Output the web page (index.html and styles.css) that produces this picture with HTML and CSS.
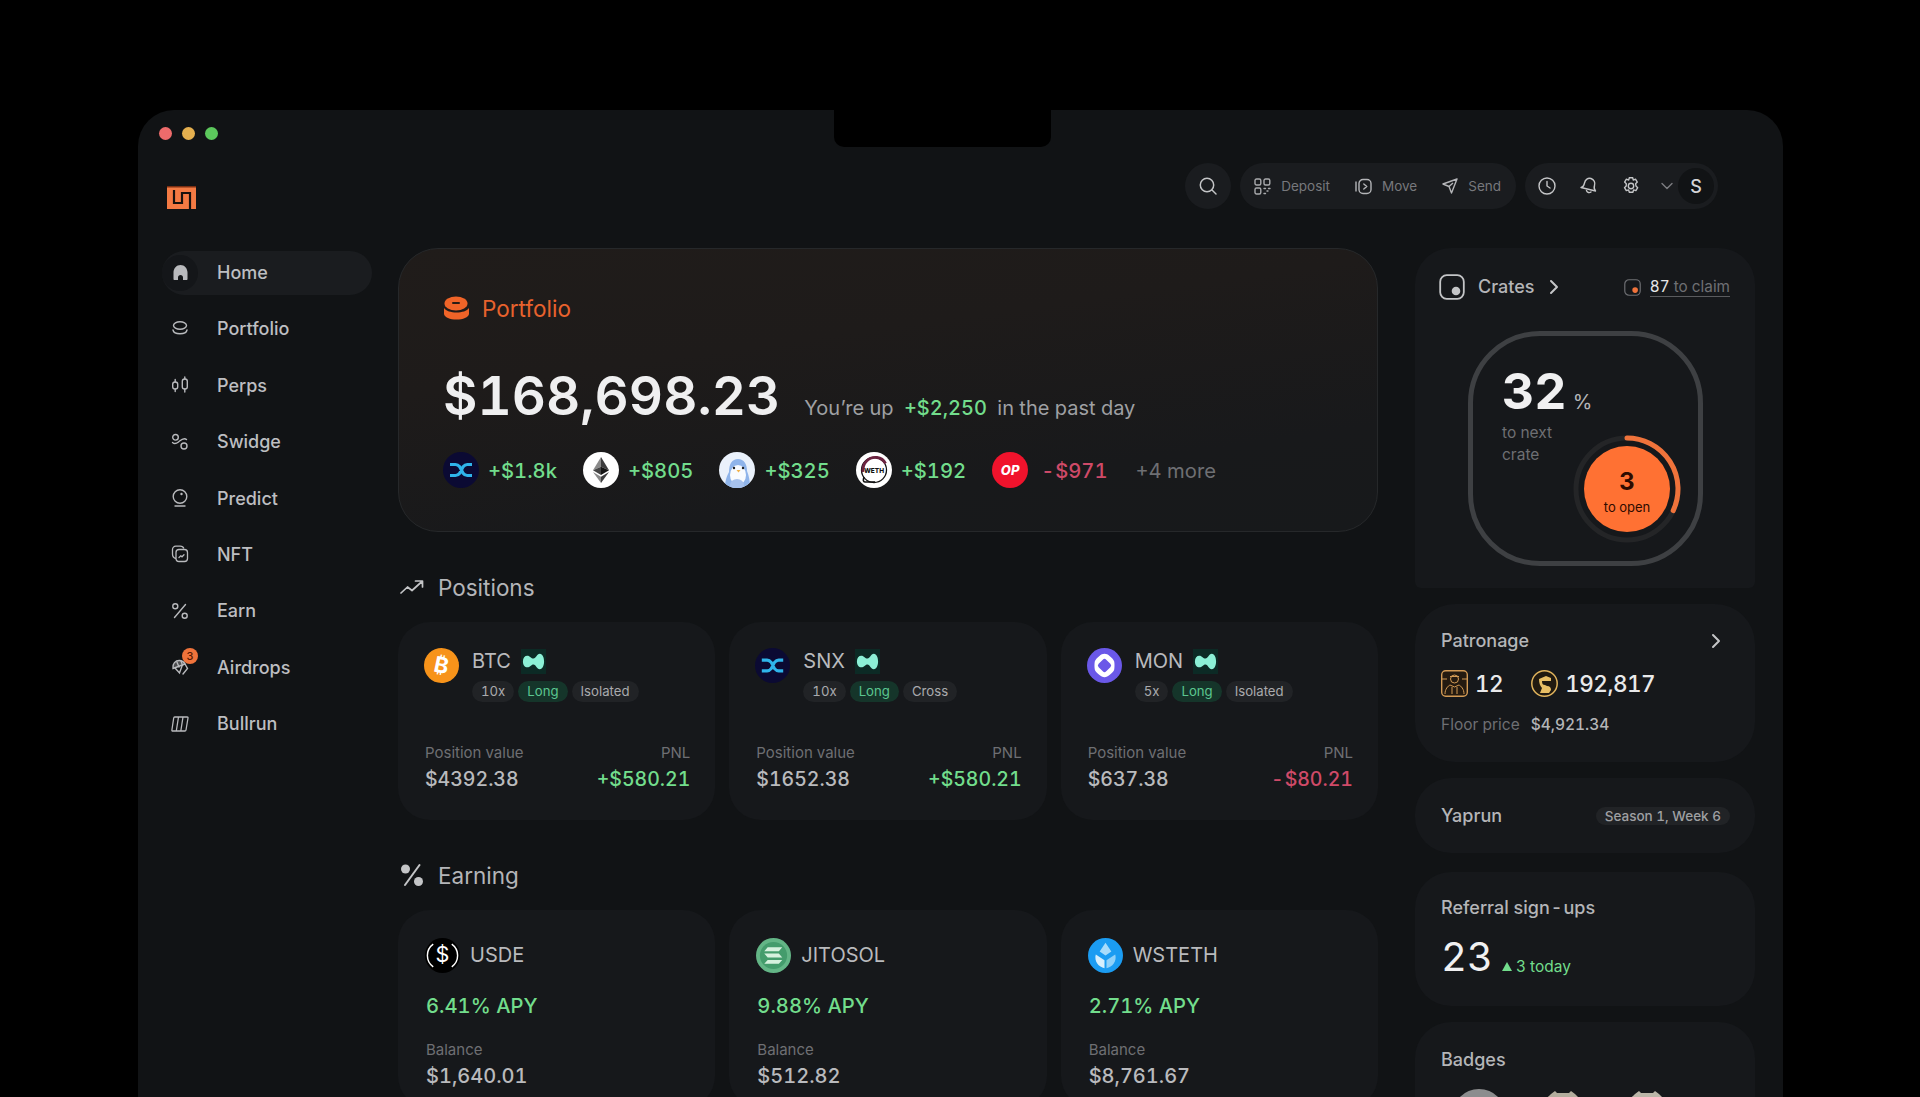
FILE: index.html
```html
<!DOCTYPE html>
<html lang="en">
<head>
  <meta charset="UTF-8" />
  <meta name="viewport" content="width=device-width,initial-scale=1.0"/>
  <title>Portfolio dashboard</title>
  <link rel="stylesheet" href="styles.css">
</head>
<body>
  <svg class="defs" width="0" height="0">
    <symbol id="snx" viewBox="0 0 36 36">
      <circle cx="18" cy="18" r="18" fill="#0b0a33"/>
      <path d="M7 12.5h5.5c2 0 3 .8 4.2 2.3l3.4 6.4c1.2 1.5 2.2 2.3 4.2 2.3H29M7 23.5h5.5c2 0 3-.8 4.2-2.3l3.4-6.4c1.2-1.5 2.2-2.3 4.2-2.3H29" fill="none" stroke="#2fb4ea" stroke-width="3.2"/>
    </symbol>
    <symbol id="hl" viewBox="0 0 26 26">
      <rect width="26" height="26" fill="#0c2a25"/>
      <path d="M2 13c0-4 2-6 4.500-6 3 0 4 3 6.500 3s3.500-5 6.500-5c3 0 4.500 4 4.500 8s-1.500 8-4.500 8c-3 0-4-5-6.500-5s-3.500 3-6.500 3C4 19 2 17 2 13z" fill="#8cf0d6"/>
    </symbol>
    <symbol id="crate" viewBox="0 0 26 26">
      <rect x="1.200" y="1.200" width="23.600" height="23.600" rx="6.500" fill="none" stroke="currentColor" stroke-width="1.800"/>
      <circle cx="17" cy="17" r="4.300" fill="var(--dot)"/>
    </symbol>
    <symbol id="chev" viewBox="0 0 12 16">
      <path d="M3 2l6 6-6 6" fill="none" stroke="currentColor" stroke-width="2" stroke-linecap="round" stroke-linejoin="round"/>
    </symbol>
  </svg>

  <div class="window">
    <div class="notch"></div>
    <div class="lights"><i class="red"></i><i class="yellow"></i><i class="green"></i></div>

    <header class="topbar">
      <svg class="logo" viewBox="0 0 29 23"><path fill="#f47a43" d="M0 0h29v23H0z"/><path d="M7 4V17H15V7H23V23" fill="none" stroke="#17120f" stroke-width="2.200"/><path d="M0 .8h29" stroke="#7a2e12" stroke-width="1.500"/></svg>
      <div class="actions">
        <button class="round-btn" aria-label="Search">
          <svg width="20" height="20" viewBox="0 0 20 20" fill="none" stroke="#c4c5c7" stroke-width="1.500"><circle cx="9" cy="9" r="6.700"/><path d="M14 14l4 4" stroke-linecap="round"/></svg>
        </button>
        <div class="pill-group">
          <a class="pill-link">
            <svg width="17" height="17" viewBox="0 0 17 17" fill="none" stroke="#a9aaad" stroke-width="1.400"><rect x="1" y="1" width="5.800" height="6" rx="1.500"/><rect x="10" y="1" width="5.800" height="6" rx="1.500"/><rect x="1" y="10" width="5.800" height="6" rx="1.500"/><path d="M10 10.500h1.500M14.500 10.500h1.500M10 15.500h1.500M13 13h1" stroke-linecap="round"/></svg>
            Deposit
          </a>
          <a class="pill-link">
            <svg width="17" height="17" viewBox="0 0 17 17" fill="none" stroke="#b4b5b8" stroke-width="1.400"><path d="M1 4v9" stroke-linecap="round"/><rect x="4" y="1.500" width="12" height="14" rx="4"/><path d="M8.800 6l3 2.500-3 2.500" stroke-linecap="round" stroke-linejoin="round"/></svg>
            Move
          </a>
          <a class="pill-link">
            <svg width="16" height="16" viewBox="0 0 16 16" fill="none" stroke="#b4b5b8" stroke-width="1.400" stroke-linejoin="round"><path d="M15 1L1 6l6 2.500L9.500 15 15 1zM7 8.500L11 5"/></svg>
            Send
          </a>
        </div>
        <div class="pill-group tools">
          <svg width="20" height="20" viewBox="0 0 20 20" fill="none" stroke="#c4c5c7" stroke-width="1.400"><circle cx="10" cy="10" r="8"/><path d="M10 5.500V10l3 2" stroke-linecap="round"/></svg>
          <svg width="20" height="20" viewBox="0 0 20 20" fill="none" stroke="#c4c5c7" stroke-width="1.400" stroke-linejoin="round"><path d="M2 11.500c2.500-.5 3-2 3.500-4.500C6.200 3.500 9 1.500 12 2.500s4.500 4 3.500 7c-.8 2.300-.5 3.800 1 5.500L2 11.500z"/><path d="M7.500 14.500c.5 2 3 2.800 4.500 1.500" stroke-linecap="round"/></svg>
          <svg width="20" height="20" viewBox="0 0 20 20" fill="none" stroke="#c4c5c7" stroke-width="1.400" stroke-linejoin="round"><path d="M8.300 1.800h3.400l.6 2.300 2.200-.9 1.800 2.900-1.700 1.700.4 2.200 1.700 1.700-1.800 2.900-2.300-.7-.7 2.300H8.300l-.7-2.300-2.300.7-1.800-2.900 1.700-1.700.1-2.200L3.600 6.100l1.800-2.900 2.300.9z"/><circle cx="10" cy="10" r="2.700"/></svg>
          <svg class="chev-down" width="12" height="8" viewBox="0 0 12 8" fill="none" stroke="#7c7d81" stroke-width="1.400"><path d="M1 1.500l5 5 5-5" stroke-linecap="round" stroke-linejoin="round"/></svg>
          <span class="avatar">S</span>
        </div>
      </div>
    </header>

    <div class="layout">
      <nav class="sidebar">
        <a class="nav-item active">
          <span class="nav-icon"><svg width="17" height="17" viewBox="0 0 17 17"><path d="M8.500 1C4.500 1 1.500 4.500 1.500 8.500V15c0 .6.400 1 1 1H6v-2.500c0-1.400 1-2.500 2.500-2.500S11 12.100 11 13.500V16h3.500c.6 0 1-.4 1-1V8.500C15.500 4.500 12.500 1 8.500 1z" fill="#b9babd"/></svg></span>
          Home
        </a>
        <a class="nav-item">
          <span class="nav-icon"><svg width="18" height="18" viewBox="0 0 18 18" fill="none" stroke="#b9babd" stroke-width="1.400"><ellipse cx="9" cy="5.500" rx="6.500" ry="3.700"/><path d="M2 10c.5 2.500 3 3.800 7 3.800s6.500-1.300 7-3.800" stroke-linecap="round"/></svg></span>
          Portfolio
        </a>
        <a class="nav-item">
          <span class="nav-icon"><svg width="18" height="18" viewBox="0 0 18 18" fill="none" stroke="#b9babd" stroke-width="1.400"><rect x="1.700" y="6" width="5" height="7" rx="2.300"/><rect x="11.300" y="3" width="5" height="10" rx="2.300"/><path d="M4.200 3.500V6M4.200 13v2.500M13.800 1v2M13.800 13v3" stroke-linecap="round"/></svg></span>
          Perps
        </a>
        <a class="nav-item">
          <span class="nav-icon"><svg width="18" height="18" viewBox="0 0 18 18" fill="none" stroke="#b9babd" stroke-width="1.400"><circle cx="4.500" cy="4.300" r="2.800"/><circle cx="13" cy="13" r="3"/><path d="M1.500 9.500c2 2 3.500 1.500 6-.5s5-5 8-2.500" stroke-linecap="round"/></svg></span>
          Swidge
        </a>
        <a class="nav-item">
          <span class="nav-icon"><svg width="18" height="18" viewBox="0 0 18 18" fill="none" stroke="#b9babd" stroke-width="1.400"><circle cx="9" cy="7.500" r="6.800"/><circle cx="10.500" cy="5" r="1.200" fill="#b9babd" stroke="none"/><path d="M4 17h10" stroke-linecap="round"/></svg></span>
          Predict
        </a>
        <a class="nav-item">
          <span class="nav-icon"><svg width="18" height="18" viewBox="0 0 18 18" fill="none" stroke="#b9babd" stroke-width="1.300"><path d="M5 13.500C2.500 13 1.500 11.500 1.500 9V4.500c0-2 1.500-3.300 3.300-3.300h4.500c1.800 0 3 .8 3.500 2.300"/><rect x="5" y="4.500" width="11.500" height="12" rx="3"/><path d="M8 12.500l1.800-1.700 1.200 1 2-2" stroke-linecap="round"/></svg></span>
          NFT
        </a>
        <a class="nav-item">
          <span class="nav-icon"><svg width="18" height="18" viewBox="0 0 18 18" fill="none" stroke="#b9babd" stroke-width="1.400"><circle cx="4.300" cy="4.300" r="2.500"/><circle cx="13.700" cy="13.700" r="2.500"/><path d="M14.500 2.500L3.500 15.500" stroke-linecap="round"/></svg></span>
          Earn
        </a>
        <a class="nav-item">
          <span class="nav-icon"><svg width="18" height="18" viewBox="0 0 18 18" fill="none" stroke="#b9babd" stroke-width="1.400"><path d="M2 10.500C1 6 4.500 2 9 2.500c2.500.3 4 1.500 5 3.500L2 10.500z" fill="#b9babd" fill-opacity=".35"/><path d="M6 4.200l2 4.800M10 2.800l1.500 4.600M4 10l4.500 5 2.500-7M14 6l2.500 4.500L12 16" stroke-linecap="round"/></svg><b class="nav-badge">3</b></span>
          Airdrops
        </a>
        <a class="nav-item">
          <span class="nav-icon"><svg width="18" height="18" viewBox="0 0 18 18" fill="none" stroke="#b9babd" stroke-width="1.300" stroke-linejoin="round"><path d="M3.700 2h12.500c.6 0 .9.400.8 1l-2 12c-.1.600-.5 1-1.100 1H1.700c-.6 0-.9-.4-.8-1L2.700 3c.1-.6.400-1 1-1zM7.500 2L5.300 16M12 2L9.800 16"/></svg></span>
          Bullrun
        </a>
      </nav>

      <main class="main">
        <section class="portfolio">
          <h2 class="portfolio-title">
            <svg width="27" height="24" viewBox="0 0 27 24"><ellipse cx="13" cy="7.500" rx="11.500" ry="7" fill="#f06428"/><rect x="9" y="6" width="8" height="2" rx="1" fill="#2a1c16"/><path d="M1 12c2 3 7 4.500 12.500 4.500S24 15 26 12v6c-.5 3.500-6 5.500-12.500 5.500S1.500 21.500 1 18z" fill="#f06428"/></svg>
            Portfolio
          </h2>
          <div class="balance">
            <span class="amount">$168,698.23</span>
            <span class="change">You&rsquo;re up <b class="up">+$2,250</b> in the past day</span>
          </div>
          <div class="movers">
            <div class="mover">
              <svg class="token" viewBox="0 0 36 36"><use href="#snx"/></svg>
              <span class="up">+$1.8k</span>
            </div>
            <div class="mover">
              <svg class="token" viewBox="0 0 36 36"><circle cx="18" cy="18" r="18" fill="#fff"/><path d="M18 5l-8 13.200 8-3.500z" fill="#8a8a8a"/><path d="M18 5l8 13.200-8-3.500z" fill="#3c3c3d"/><path d="M10 18.200l8 4.800v-8.300z" fill="#454545"/><path d="M26 18.200L18 23v-8.300z" fill="#141414"/><path d="M10 20l8 11v-6.300z" fill="#8a8a8a"/><path d="M26 20l-8 11v-6.300z" fill="#3c3c3d"/></svg>
              <span class="up">+$805</span>
            </div>
            <div class="mover">
              <svg class="token" viewBox="0 0 36 36"><clipPath id="pengu"><circle cx="18" cy="18" r="18"/></clipPath><g clip-path="url(#pengu)"><rect width="36" height="36" fill="#eaf1fb"/><path d="M6 36c0-8 2-12 4-16C10 12 13 7 19 7s9 5 9 12c2 5 3 10 3 17z" fill="#8fb4ea"/><ellipse cx="19" cy="23" rx="8" ry="10" fill="#f8fbff"/><ellipse cx="18" cy="33" rx="7" ry="6" fill="#a7c2ee"/><circle cx="15" cy="16" r="1.200" fill="#222"/><circle cx="24" cy="16" r="1.200" fill="#222"/><path d="M17.500 18h4l-2 2.500z" fill="#f2b24a"/></g></svg>
              <span class="up">+$325</span>
            </div>
            <div class="mover">
              <svg class="token" viewBox="0 0 36 36"><circle cx="18" cy="18" r="18" fill="#fff"/><circle cx="18" cy="18" r="12.500" fill="none" stroke="#111" stroke-width="1.300"/><path d="M7 20C6 11 13 4.500 21 5.500c4 .5 7 3 8.500 6" fill="none" stroke="#6b2340" stroke-width="2.800"/><path d="M8 25c-1 3-1 5 1 5h10" fill="none" stroke="#111" stroke-width="1.600"/><text class="weth-text" x="18" y="20.800" text-anchor="middle">WETH</text></svg>
              <span class="up">+$192</span>
            </div>
            <div class="mover">
              <span class="token op">OP</span>
              <span class="down loss"><span class="dash">-</span>$971</span>
            </div>
            <span class="more">+4 more</span>
          </div>
        </section>

        <h3 class="section-title">
          <svg width="24" height="16" viewBox="0 0 24 16" fill="none" stroke="#c4c5c7" stroke-width="1.700" stroke-linecap="round" stroke-linejoin="round"><path d="M1 14l6.500-6 4.500 3.500L22 2.500M15.500 2H22.500V8"/></svg>
          Positions
        </h3>
        <div class="cards">
          <article class="card position">
            <div class="card-head">
              <span class="token-sm btc">&#8383;</span>
              <div>
                <div class="name-row">BTC <svg class="hl" viewBox="0 0 26 26"><use href="#hl"/></svg></div>
                <div class="tags"><span class="tag">10x</span><span class="tag long">Long</span><span class="tag">Isolated</span></div>
              </div>
            </div>
            <div class="card-foot">
              <div><div class="label">Position value</div><div class="value">$4392.38</div></div>
              <div class="right"><div class="label">PNL</div><div class="value up">+$580.21</div></div>
            </div>
          </article>
          <article class="card position">
            <div class="card-head">
              <svg class="token-sm" viewBox="0 0 36 36"><use href="#snx"/></svg>
              <div>
                <div class="name-row">SNX <svg class="hl" viewBox="0 0 26 26"><use href="#hl"/></svg></div>
                <div class="tags"><span class="tag">10x</span><span class="tag long">Long</span><span class="tag">Cross</span></div>
              </div>
            </div>
            <div class="card-foot">
              <div><div class="label">Position value</div><div class="value">$1652.38</div></div>
              <div class="right"><div class="label">PNL</div><div class="value up">+$580.21</div></div>
            </div>
          </article>
          <article class="card position">
            <div class="card-head">
              <svg class="token-sm" viewBox="0 0 36 36"><circle cx="18" cy="18" r="18" fill="#6a58e8"/><path d="M18 6c2 0 3.500.8 5.500 2.500 2 1.800 4 3.500 4.500 5.500.4 2.500.4 5.500 0 8-.5 2-2.500 3.700-4.500 5.500C21.500 29.200 20 30 18 30s-3.500-.8-5.500-2.500C10.500 25.700 8.500 24 8 22c-.4-2.500-.4-5.500 0-8 .5-2 2.500-3.700 4.500-5.500C14.500 6.800 16 6 18 6z" fill="#fff"/><rect x="12.500" y="12.500" width="11" height="11" rx="2.500" transform="rotate(45 18 18)" fill="#6a58e8"/></svg>
              <div>
                <div class="name-row">MON <svg class="hl" viewBox="0 0 26 26"><use href="#hl"/></svg></div>
                <div class="tags"><span class="tag">5x</span><span class="tag long">Long</span><span class="tag">Isolated</span></div>
              </div>
            </div>
            <div class="card-foot">
              <div><div class="label">Position value</div><div class="value">$637.38</div></div>
              <div class="right"><div class="label">PNL</div><div class="value down"><span class="dash">-</span>$80.21</div></div>
            </div>
          </article>
        </div>

        <h3 class="section-title">
          <svg width="24" height="24" viewBox="0 0 24 24" fill="#c4c5c7"><circle cx="5.500" cy="6" r="4.500"/><circle cx="18.500" cy="18.500" r="4.500"/><path d="M19.500 2L5 22" stroke="#c4c5c7" stroke-width="2" stroke-linecap="round"/></svg>
          Earning
        </h3>
        <div class="cards">
          <article class="card earn">
            <div class="earn-head">
              <svg class="token-earn" viewBox="0 0 34 34"><circle cx="17" cy="17" r="17" fill="#000"/><path d="M8 6a13.500 13.500 0 000 22M26 6a13.500 13.500 0 010 22" fill="none" stroke="#fff" stroke-width="1.400"/><text class="usde-text" x="17" y="23.500" text-anchor="middle">$</text></svg>
              USDE
            </div>
            <div class="apy up">6.41% APY</div>
            <div class="label">Balance</div>
            <div class="value">$1,640.01</div>
          </article>
          <article class="card earn">
            <div class="earn-head">
              <svg class="token-earn" viewBox="0 0 36 36"><circle cx="18" cy="18" r="18" fill="#63b586"/><circle cx="18" cy="18" r="14" fill="#449c6c"/><path d="M12 9.500h15l-3.500 4H8.500zM8.500 16h15l3.500 4H12zM12 22.500h15l-3.500 4H8.500z" fill="#d6f1de"/></svg>
              JITOSOL
            </div>
            <div class="apy up">9.88% APY</div>
            <div class="label">Balance</div>
            <div class="value">$512.82</div>
          </article>
          <article class="card earn">
            <div class="earn-head">
              <svg class="token-earn" viewBox="0 0 36 36"><circle cx="18" cy="18" r="18" fill="#1b9cf2"/><path d="M18 5l6 9-6 4-6-4z" fill="#a8dcfb"/><path d="M8 17c-2 7 3 13 9 14v-8z" fill="#d6effd"/><path d="M28 17c2 7-3 13-9 14v-8z" fill="#8fd1fa"/></svg>
              WSTETH
            </div>
            <div class="apy up">2.71% APY</div>
            <div class="label">Balance</div>
            <div class="value">$8,761.67</div>
          </article>
        </div>
      </main>

      <aside class="rail">
        <section class="panel crates">
          <div class="crates-head">
            <svg class="crate-lg" viewBox="0 0 26 26"><use href="#crate"/></svg>
            <span class="panel-title">Crates</span>
            <svg class="chev crates-chev" viewBox="0 0 12 16"><use href="#chev"/></svg>
            <a class="claim">
              <svg class="crate-sm" viewBox="0 0 26 26"><use href="#crate"/></svg>
              <span class="claim-text"><b>87</b> to claim</span>
            </a>
          </div>
          <div class="meter">
            <div class="meter-num">32<span>%</span></div>
            <div class="meter-label">to next<br>crate</div>
            <div class="open-dial">
              <svg viewBox="0 0 110 110"><circle cx="55" cy="55" r="51" fill="none" stroke="#242527" stroke-width="5"/><path d="M55 4A51 51 0 01101.200 76.600" fill="none" stroke="#f0733b" stroke-width="5" stroke-linecap="round"/></svg>
              <div class="open-btn"><b>3</b><span>to open</span></div>
            </div>
          </div>
        </section>

        <section class="panel patronage">
          <div class="panel-row">
            <span class="panel-title">Patronage</span>
            <svg class="chev" viewBox="0 0 12 16"><use href="#chev"/></svg>
          </div>
          <div class="patron-stats">
            <svg width="27" height="27" viewBox="0 0 27 27" fill="none" stroke="#d29a55" stroke-width="1"><rect x=".7" y=".7" width="25.600" height="25.600" rx="4" fill="#241a10" stroke-width="1.400"/><circle cx="13.500" cy="9" r="4"/><path d="M9 6.500h9M4 24c0-5 3-8 5-9l4.500 2 4.500-2c2 1 5 4 5 9M11 17v7M16 17v7M1 9h5M21 9h5"/></svg>
            <b>12</b>
            <svg class="coin" width="27" height="27" viewBox="0 0 27 27"><circle cx="13.500" cy="13.500" r="12.700" fill="#211a10" stroke="#e0b35c" stroke-width="1.500"/><path d="M8 9l7-3 5 2v3h-9c0 3 1 4 3 4l2 1c3 0 4 2 4 4l-2 3H9l2-5c-2-2-3-5-3-9z" fill="#e9bf65"/></svg>
            <b>192,817</b>
          </div>
          <div class="floor"><span>Floor price</span><b>$4,921.34</b></div>
        </section>

        <section class="panel yaprun">
          <span class="panel-title">Yaprun</span>
          <span class="season">Season 1, Week 6</span>
        </section>

        <section class="panel referral">
          <span class="panel-title">Referral sign<span class="dash-soft">-</span>ups</span>
          <div class="ref-count">23 <span class="ref-today"><i class="tri"></i>3 today</span></div>
        </section>

        <section class="panel badges">
          <span class="panel-title">Badges</span>
          <div class="badge-row">
            <svg width="56" height="56" viewBox="0 0 56 56"><circle cx="28" cy="28" r="27" fill="#8c8d8e"/><circle cx="28" cy="28" r="19" fill="#a5553f"/></svg>
            <svg width="56" height="56" viewBox="0 0 56 56"><path d="M16 6l4-3 2 2h12l2-2 4 3 2 2 6 6v30H6V14l8-6z" fill="#b3ad9d"/><circle cx="28" cy="28" r="19" fill="#2a2622"/></svg>
            <svg width="56" height="56" viewBox="0 0 56 56"><path d="M16 6l4-3 2 2h12l2-2 4 3 2 2 6 6v30H6V14l8-6z" fill="#bbb6a8"/><circle cx="28" cy="28" r="19" fill="#2a2622"/></svg>
          </div>
        </section>
      </aside>
    </div>
  </div>
</body>
</html>
```

FILE: styles.css
```css
* {
  box-sizing: border-box;
}
html, body {
  margin: 0;
  padding: 0;
  height: 1097px;
  overflow: hidden;
  background: #000;
}
body {
  font-family: 'Inter', 'Liberation Sans', sans-serif;
  font-variant-numeric: tabular-nums;
  color: #c4c5c7;
}
.defs {
  position: absolute;
}
h2, h3 {
  margin: 0;
  font-weight: 400;
}
b {
  font-weight: 500;
}
.up { color: #72dd8c; }
.down { color: #cf4a68; }
.dash { margin-right: 1px; }
.dash-soft { margin: 0 1px; }
.loss { margin-left: 4px; }

.window {
  position: relative;
  width: 1645px;
  height: 987px;
  margin: 110px 0 0 138px;
  padding: 17px 24px 0 24px;
  background: #111315;
  border-radius: 36px 36px 0 0;
  overflow: hidden;
}
.notch {
  position: absolute;
  top: 0;
  left: 696px;
  width: 217px;
  height: 37px;
  background: #000;
  border-radius: 0 0 10px 10px;
}
.lights {
  display: flex;
  gap: 10px;
  margin-left: -3px;
}
.lights i {
  width: 13px;
  height: 13px;
  border-radius: 50%;
}
.lights .red { background: #ee6b6b; }
.lights .yellow { background: #e5b04f; }
.lights .green { background: #5cc85c; }

.topbar {
  display: flex;
  align-items: center;
  justify-content: space-between;
  height: 46px;
  margin-top: 23px;
  padding: 0 41px 0 5px;
}
.logo {
  align-self: flex-start;
  width: 29px;
  height: 23px;
  margin-top: 23px;
}
.actions {
  display: flex;
  align-items: center;
  gap: 9px;
}
.round-btn {
  display: flex;
  align-items: center;
  justify-content: center;
  width: 46px;
  height: 46px;
  padding: 0;
  border: none;
  border-radius: 50%;
  background: #1a1c1f;
}
.pill-group {
  display: flex;
  align-items: center;
  height: 46px;
  padding: 0 15px 0 14px;
  gap: 25px;
  background: #1a1c1f;
  border-radius: 23px;
}
.pill-link {
  display: flex;
  align-items: center;
  gap: 10px;
  font-size: 13.500px;
  color: #77787c;
}
.tools {
  gap: 22px;
  padding: 0 4px 0 12px;
}
.chev-down {
  margin: 0 -17px 0 -2px;
}
.avatar {
  display: flex;
  align-items: center;
  justify-content: center;
  width: 36px;
  height: 36px;
  border-radius: 50%;
  background: #111315;
  font-size: 18px;
  font-weight: 500;
  color: #d4d5d7;
}

.layout {
  display: grid;
  grid-template-columns: 210px 980px 340px;
  column-gap: 26px;
  margin-top: 39px;
}

.sidebar {
  display: flex;
  flex-direction: column;
  gap: 12.400px;
  padding-top: 2.500px;
}
.nav-item {
  display: flex;
  align-items: center;
  gap: 19px;
  height: 44px;
  border-radius: 22px;
  font-size: 18px;
  font-weight: 500;
  color: #bdbec1;
}
.nav-item.active {
  background: #1a1c1f;
}
.nav-icon {
  position: relative;
  display: flex;
  align-items: center;
  justify-content: center;
  width: 36px;
  height: 36px;
  border-radius: 50%;
}
.active .nav-icon {
  background: #141619;
}
.nav-badge {
  position: absolute;
  top: -1px;
  left: 20px;
  width: 16px;
  height: 16px;
  border-radius: 50%;
  background: #f0733b;
  color: #5a1a00;
  font-size: 11px;
  font-weight: 500;
  line-height: 16px;
  text-align: center;
}

.portfolio {
  height: 284px;
  padding: 44px 44px 0 44px;
  border: 1px solid #26282a;
  border-radius: 40px;
  background: linear-gradient(172deg, #201c1a 0%, #1e1b1a 35%, #18191b 75%, #17191b 100%);
}
.portfolio-title {
  display: flex;
  align-items: center;
  gap: 12px;
  height: 30px;
  font-size: 22.500px;
  color: #e8622d;
}
.balance {
  display: flex;
  align-items: baseline;
  gap: 24px;
  margin-top: 40px;
}
.amount {
  font-size: 53px;
  line-height: 66px;
  font-weight: 600;
  color: #efeff0;
}
.change {
  font-size: 20px;
  color: #9fa0a3;
}
.change b {
  margin: 0 5px;
}
.movers {
  display: flex;
  align-items: center;
  gap: 26px;
  margin-top: 23px;
  font-size: 20.200px;
  font-weight: 500;
}
.mover {
  display: flex;
  align-items: center;
  gap: 9px;
}
.token {
  display: block;
  width: 36px;
  height: 36px;
}
.op {
  border-radius: 50%;
  background: #f0132c;
  color: #fff;
  font-size: 13px;
  font-weight: 800;
  font-style: italic;
  line-height: 36px;
  text-align: center;
}
.weth-text {
  font-size: 6.500px;
  font-weight: 800;
  fill: #111;
}
.usde-text {
  font-size: 21px;
  fill: #fff;
}
.more {
  margin-left: 2px;
  font-weight: 400;
  color: #6e6f73;
}

.section-title {
  display: flex;
  align-items: center;
  gap: 14px;
  height: 34px;
  margin: 38px 0 18px 0;
  padding-left: 2px;
  font-size: 22.500px;
  color: #b4b5b8;
}
.cards {
  display: grid;
  grid-template-columns: repeat(3, 1fr);
  gap: 14px;
}
.card {
  display: flex;
  flex-direction: column;
  height: 198px;
  border-radius: 32px;
  background: #16181b;
}
.position {
  padding: 26px 25px 28px 26px;
}
.position .value {
  font-size: 19.500px;
}
.card-head {
  display: flex;
  gap: 13px;
}
.token-sm {
  display: block;
  flex: none;
  width: 35px;
  height: 35px;
}
.btc {
  border-radius: 50%;
  background: #f7931a;
  color: #fff;
  font-size: 22px;
  font-weight: 700;
  line-height: 35px;
  text-align: center;
  transform: rotate(12deg);
}
.name-row {
  display: flex;
  align-items: center;
  gap: 10px;
  height: 26px;
  font-size: 20px;
  color: #b9babd;
}
.hl {
  width: 25px;
  height: 25px;
}
.tags {
  display: flex;
  gap: 4px;
  margin-top: 7px;
}
.tag {
  height: 21px;
  padding: 0 9px;
  border-radius: 11px;
  background: #212326;
  font-size: 13.200px;
  line-height: 21px;
  color: #a9aaad;
}
.tag.long {
  background: #15352a;
  color: #5bc690;
}
.card-foot {
  display: flex;
  justify-content: space-between;
  margin-top: auto;
  padding-left: 1px;
}
.right {
  text-align: right;
}
.label {
  font-size: 15px;
  line-height: 18px;
  color: #6e6f73;
}
.value {
  margin-top: 4px;
  font-size: 20px;
  line-height: 26px;
  font-weight: 500;
  color: #b9babd;
}
.value.up { color: #72dd8c; }
.value.down { color: #cf4a68; }
.earn {
  padding: 28px 26px 0 28px;
}
.earn-head {
  display: flex;
  align-items: center;
  gap: 10px;
  height: 34px;
  font-size: 20px;
  color: #b9babd;
}
.token-earn {
  display: block;
  width: 35px;
  height: 35px;
  margin-left: -1px;
}
.apy {
  margin: 21px 0 22px 0;
  font-size: 20.200px;
  line-height: 26px;
  font-weight: 500;
}

.rail {
  display: flex;
  flex-direction: column;
  gap: 16px;
  width: 340px;
  margin-left: 11px;
}
.panel {
  padding: 0 26px;
  border-radius: 36px;
  background: #16181b;
}
.panel-title {
  font-size: 18px;
  font-weight: 500;
  line-height: 24px;
  color: #b4b5b8;
}
.chev {
  width: 12px;
  height: 16px;
  color: #c4c5c7;
}
.crates {
  flex: none;
  height: 340px;
  padding: 26px 25px 0 24px;
  border-radius: 36px 36px 6px 6px;
}
.crates-head {
  display: flex;
  align-items: center;
  height: 26px;
  --dot: #c4c5c7;
  color: #c4c5c7;
}
.crate-lg {
  width: 26px;
  height: 26px;
}
.crates-head .panel-title {
  margin-left: 13px;
}
.crates-chev {
  margin-left: 13px;
}
.claim {
  display: flex;
  align-items: center;
  gap: 9px;
  margin-left: auto;
  --dot: #f0733b;
  font-size: 15.300px;
  color: #6e6f73;
}
.crate-sm {
  width: 17px;
  height: 17px;
}
.claim-text {
  border-bottom: 1px solid #5a5b5e;
  line-height: 19px;
}
.claim-text b {
  font-weight: 400;
  color: #e6e6e7;
}
.meter {
  position: relative;
  width: 235px;
  height: 235px;
  margin: 31px 0 0 29px;
  padding: 35px 0 0 29px;
  border: 5px solid #3e4043;
  border-radius: 72px;
}
.meter-num {
  font-size: 50px;
  line-height: 40px;
  font-weight: 700;
  color: #f0f0f1;
}
.meter-num span {
  margin-left: 6px;
  font-size: 20px;
  font-weight: 400;
  color: #b4b5b8;
}
.meter-label {
  font-size: 15.500px;
  line-height: 22px;
  color: #6e6f73;
}
.open-dial {
  position: absolute;
  left: 99px;
  top: 98px;
  width: 110px;
  height: 110px;
}
.open-dial svg {
  display: block;
  width: 110px;
  height: 110px;
}
.open-btn {
  position: absolute;
  left: 12px;
  top: 12px;
  display: flex;
  flex-direction: column;
  align-items: center;
  width: 86px;
  height: 86px;
  padding-top: 21px;
  border-radius: 50%;
  background: #ff7133;
  color: #2e0b00;
}
.open-btn b {
  font-size: 24px;
  line-height: 30px;
  font-weight: 700;
}
.open-btn span {
  margin-top: 2px;
  font-size: 13px;
  line-height: 16px;
}
.patronage {
  flex: none;
  height: 158px;
  padding-top: 25px;
  border-radius: 40px;
}
.panel-row {
  display: flex;
  align-items: center;
  justify-content: space-between;
  padding-right: 7px;
}
.patron-stats {
  display: flex;
  align-items: center;
  gap: 7px;
  height: 28px;
  margin-top: 16px;
  font-size: 22.500px;
  letter-spacing: -.5px;
}
.patron-stats b {
  color: #e9e9ea;
}
.coin {
  margin-left: 21px;
}
.floor {
  display: flex;
  gap: 11px;
  margin-top: 18px;
  font-size: 15.500px;
  line-height: 20px;
  color: #6e6f73;
}
.floor b {
  color: #b4b5b8;
}
.yaprun {
  display: flex;
  flex: none;
  align-items: center;
  justify-content: space-between;
  height: 75px;
  padding-right: 25px;
  border-radius: 36px;
}
.season {
  height: 18px;
  padding: 0 9px;
  border-radius: 9px;
  background: #212326;
  font-size: 13.500px;
  font-weight: 500;
  line-height: 18px;
  color: #9fa0a3;
}
.referral {
  flex: none;
  height: 134px;
  margin-top: 3px;
  padding-top: 24px;
}
.ref-count {
  display: flex;
  align-items: baseline;
  gap: 9px;
  margin-top: 13px;
  font-size: 40px;
  line-height: 48px;
  color: #f0f0f1;
}
.ref-today {
  display: flex;
  align-items: center;
  gap: 4px;
  font-size: 15.500px;
  line-height: 20px;
  color: #72dd8c;
}
.tri {
  width: 0;
  height: 0;
  border-left: 5px solid transparent;
  border-right: 5px solid transparent;
  border-bottom: 9px solid #72dd8c;
}
.badges {
  flex: none;
  height: 200px;
  padding-top: 26px;
}
.badge-row {
  display: flex;
  gap: 28px;
  margin-top: 16px;
  padding-left: 10px;
}
```
